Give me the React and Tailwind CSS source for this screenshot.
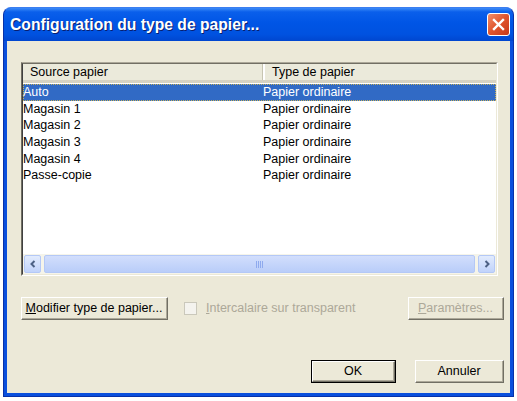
import React from 'react';

const rows = [
  { source: 'Auto', type: 'Papier ordinaire' },
  { source: 'Magasin 1', type: 'Papier ordinaire' },
  { source: 'Magasin 2', type: 'Papier ordinaire' },
  { source: 'Magasin 3', type: 'Papier ordinaire' },
  { source: 'Magasin 4', type: 'Papier ordinaire' },
  { source: 'Passe-copie', type: 'Papier ordinaire' },
];

/* ── classic 3D push button ── */
const Button = ({ children, width, disabled, isDefault }) => (
  <div
    className={`h-[23px] ${width} ${isDefault ? 'border border-black' : ''} flex`}
  >
    <div className="flex-1 flex border-t border-l border-t-white border-l-white border-r border-b border-r-[#716F64] border-b-[#716F64] bg-[#ECE9D8]">
      <div
        className={`flex-1 flex items-center justify-center border-r border-b border-r-[#ACA899] border-b-[#ACA899] text-[12.5px] ${
          disabled ? 'text-[#ACA899]' : 'text-black'
        }`}
      >
        {children}
      </div>
    </div>
  </div>
);

const Chevron = ({ dir }) => (
  <svg width="8" height="8" viewBox="0 0 8 8">
    <path
      d={dir === 'left' ? 'M5.5 1 L2.5 4 L5.5 7' : 'M2.5 1 L5.5 4 L2.5 7'}
      fill="none"
      stroke="#4D6185"
      strokeWidth="2"
    />
  </svg>
);

const ScrollArrow = ({ dir }) => (
  <div className="w-[17px] h-full flex items-center justify-center rounded-[2px] border border-[#B4C8F6] bg-[linear-gradient(to_bottom,#E2EBFD,#C1D3FB)]">
    <Chevron dir={dir} />
  </div>
);

export default function App() {
  return (
    <div className="w-[517px] h-[401px] bg-white pt-[7px] px-[3px] font-['Liberation_Sans',Arial,sans-serif]">
      <div className="h-[390px] flex flex-col rounded-t-[8px] bg-[#0A4FDD] border border-[#0831A8] border-t-[#3C7EF0]">
        {/* Title bar */}
        <div className="h-[33px] flex items-center justify-between pl-[6px] pr-[3px] rounded-t-[7px] bg-[linear-gradient(to_bottom,#3D8BF7_0%,#0A5FEB_12%,#0055E5_45%,#0052E0_80%,#0046CF_100%)]">
          <span className="text-white font-bold text-[15.7px] [text-shadow:1px_1px_#0A1E6E]">
            Configuration du type de papier...
          </span>
          <div className="w-[23px] h-[23px] rounded-[3px] border border-white flex items-center justify-center bg-[linear-gradient(135deg,#F08E6C,#E0542C_50%,#C6381A)]">
            <svg width="13" height="13" viewBox="0 0 13 13">
              <path d="M2 2 L11 11 M11 2 L2 11" stroke="white" strokeWidth="2.4" strokeLinecap="square" />
            </svg>
          </div>
        </div>

        {/* Body */}
        <div className="flex-1 flex flex-col mx-[3px] mb-[3px] bg-[#ECE9D8] pt-[21px] pl-[14px] pr-[6px]">
          {/* List view */}
          <div className="h-[214px] mr-[6px] flex flex-col border border-t-[#ACA899] border-l-[#716F64] border-r-white border-b-white">
            <div className="flex-1 flex flex-col bg-white border border-t-[#716F64] border-l-[#404040] border-r-[#ECE9D8] border-b-[#ECE9D8]">
              {/* header */}
              <div className="h-[19px] flex bg-[#EBEADB] border-b-[3px] border-b-[#D6D2C2] text-[12.5px]">
                <div className="w-[240px] flex items-center pl-[7px] border-r border-r-[#C7C5B2]">
                  Source papier
                </div>
                <div className="w-[2px] bg-white" />
                <div className="flex-1 flex items-center pl-[7px]">Type de papier</div>
              </div>
              {/* rows */}
              <div className="flex-1 text-[12.5px] pt-[1px]">
                {rows.map((r, i) => (
                  <div
                    key={r.source}
                    className={`h-[16.7px] flex items-center ${
                      i === 0
                        ? 'bg-[#316AC5] text-white outline-1 outline-dotted outline-[#C9B25A] -outline-offset-1'
                        : 'text-black'
                    }`}
                  >
                    <div className="w-[240px]">{r.source}</div>
                    <div className="flex-1">{r.type}</div>
                  </div>
                ))}
              </div>
              {/* horizontal scrollbar */}
              <div className="h-[20px] flex gap-[3px] px-[1px] py-[1px] bg-[#F5F4EA]">
                <ScrollArrow dir="left" />
                <div className="flex-1 flex items-center justify-center rounded-[2px] border border-[#B4C8F6] bg-[linear-gradient(to_bottom,#D2DEFC,#B9CDF9)]">
                  <div className="flex gap-[1px]">
                    <div className="w-[1px] h-[7px] bg-[#8EAAEE]" />
                    <div className="w-[1px] h-[7px] bg-[#8EAAEE]" />
                    <div className="w-[1px] h-[7px] bg-[#8EAAEE]" />
                    <div className="w-[1px] h-[7px] bg-[#8EAAEE]" />
                  </div>
                </div>
                <ScrollArrow dir="right" />
              </div>
            </div>
          </div>

          {/* Action row */}
          <div className="mt-[21px] flex items-center">
            <Button width="w-[147px]">
              <span>
                <span className="underline">M</span>odifier type de papier...
              </span>
            </Button>
            <div className="ml-[16px] w-[13px] h-[13px] border border-[#CAC8BB] bg-[#F4F3EE]" />
            <span className="ml-[9px] text-[12.5px] text-[#ACA899]">
              <span className="underline">I</span>ntercalaire sur transparent
            </span>
            <div className="ml-auto">
              <Button width="w-[96px]" disabled>
                <span>
                  <span className="underline">P</span>aramètres...
                </span>
              </Button>
            </div>
          </div>

          {/* Dialog buttons */}
          <div className="mt-auto mb-[10px] flex justify-end gap-[19px]">
            <Button width="w-[85px]" isDefault>
              OK
            </Button>
            <Button width="w-[89px]">Annuler</Button>
          </div>
        </div>
      </div>
    </div>
  );
}
